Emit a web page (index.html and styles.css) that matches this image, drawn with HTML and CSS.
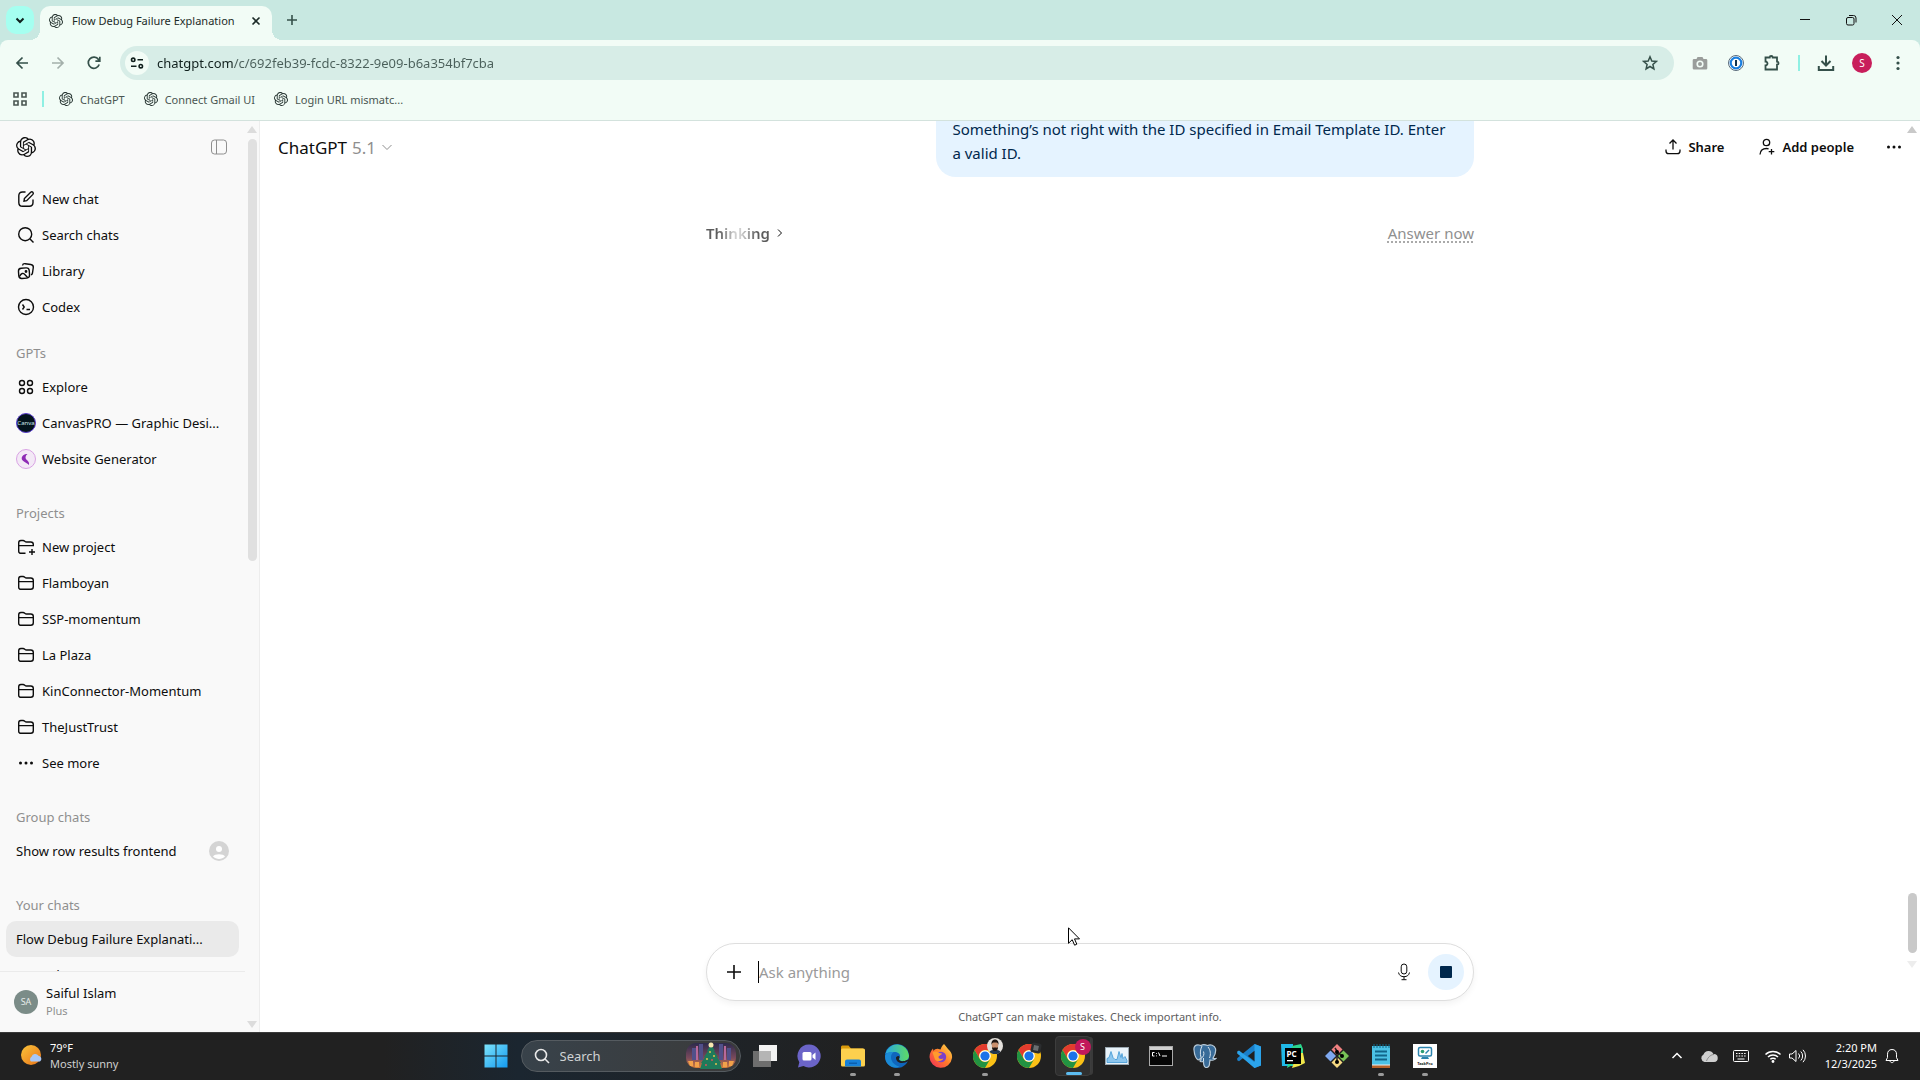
FILE: index.html
```html
<!DOCTYPE html>
<html lang="en">
<head>
  <meta charset="UTF-8" />
  <title>Flow Debug Failure Explanation</title>
  <link rel="stylesheet" href="styles.css">
</head>
<body>

<!-- shared icons -->
<svg class="sprite" aria-hidden="true">
  <symbol id="i-logo" viewBox="0 0 24 24"><path fill="currentColor" d="M22.2819 9.8211a5.9847 5.9847 0 0 0-.5157-4.9108 6.0462 6.0462 0 0 0-6.5098-2.9A6.0651 6.0651 0 0 0 4.9807 4.1818a5.9847 5.9847 0 0 0-3.9977 2.9 6.0462 6.0462 0 0 0 .7427 7.0966 5.98 5.98 0 0 0 .511 4.9107 6.051 6.051 0 0 0 6.5146 2.9001A5.9847 5.9847 0 0 0 13.2599 24a6.0557 6.0557 0 0 0 5.7718-4.2058 5.9894 5.9894 0 0 0 3.9977-2.9001 6.0557 6.0557 0 0 0-.7475-7.0729zm-9.022 12.6081a4.4755 4.4755 0 0 1-2.8764-1.0408l.1419-.0804 4.7783-2.7582a.7948.7948 0 0 0 .3927-.6813v-6.7369l2.02 1.1686a.071.071 0 0 1 .038.052v5.5826a4.504 4.504 0 0 1-4.4945 4.4944zm-9.6607-4.1254a4.4708 4.4708 0 0 1-.5346-3.0137l.142.0852 4.783 2.7582a.7712.7712 0 0 0 .7806 0l5.8428-3.3685v2.3324a.0804.0804 0 0 1-.0332.0615L9.74 19.9502a4.4992 4.4992 0 0 1-6.1408-1.6464zM2.3408 7.8956a4.485 4.485 0 0 1 2.3655-1.9728V11.6a.7664.7664 0 0 0 .3879.6765l5.8144 3.3543-2.0201 1.1685a.0757.0757 0 0 1-.071 0l-4.8303-2.7865A4.504 4.504 0 0 1 2.3408 7.872zm16.5963 3.8558L13.1038 8.364 15.1192 7.2a.0757.0757 0 0 1 .071 0l4.8303 2.7913a4.4944 4.4944 0 0 1-.6765 8.1042v-5.6772a.79.79 0 0 0-.407-.667zm2.0107-3.0231l-.142-.0852-4.7735-2.7818a.7759.7759 0 0 0-.7854 0L9.409 9.2297V6.8974a.0662.0662 0 0 1 .0284-.0615l4.8303-2.7866a4.4992 4.4992 0 0 1 6.6802 4.66zM8.3065 12.863l-2.02-1.1638a.0804.0804 0 0 1-.038-.0567V6.0742a4.4992 4.4992 0 0 1 7.3757-3.4537l-.142.0805L8.704 5.459a.7948.7948 0 0 0-.3927.6813zm1.0976-2.3654l2.602-1.4998 2.6069 1.4998v2.9994l-2.5974 1.4997-2.6067-1.4997Z"/></symbol>
  <symbol id="i-folder" viewBox="0 0 20 20"><path d="M2.7 14.2V5.8c0-1.4.7-2.3 2.2-2.3h2.2c1.7 0 1.6 1.5 3.4 1.5h4.3c1.7 0 2.5.9 2.5 2.4v6.4c0 1.5-.9 2.5-2.5 2.5H5.2c-1.6 0-2.5-.8-2.5-2.1zM2.7 8.6h14.6"/></symbol>
  <symbol id="i-dots" viewBox="0 0 20 20"><g fill="currentColor" stroke="none"><circle cx="4.5" cy="10" r="1.5"/><circle cx="10" cy="10" r="1.5"/><circle cx="15.500" cy="10" r="1.5"/></g></symbol>
  <symbol id="i-chrome" viewBox="0 0 24 24">
    <circle cx="12" cy="12" r="12" fill="#fbc116"/>
    <path fill="#e33b2e" d="M1.600 6A12 12 0 0 1 22.400 6H12a6 6 0 0 0-5.200 9z"/>
    <path fill="#229342" d="M1.600 6A12 12 0 0 0 12 24l5.200-9a6 6 0 0 1-10.400 0z"/>
    <circle cx="12" cy="12" r="5.800" fill="#fff"/>
    <circle cx="12" cy="12" r="4.600" fill="#1a73e8"/>
  </symbol>
</svg>

<header class="browser">
  <div class="tabstrip">
    <button class="tab-search" aria-label="Search tabs"><svg width="10" height="10" viewBox="0 0 10 10"><path d="M1.500 3.500 5 7l3.500-3.500" stroke-width="2"/></svg></button>
    <div class="tab">
      <svg class="favicon" width="14" height="14"><use href="#i-logo"/></svg>
      <span class="tab-title">Flow Debug Failure Explanation</span>
      <button aria-label="Close tab"><svg width="10" height="10" viewBox="0 0 10 10"><path d="m1.500 1.500 7 7m0-7-7 7" stroke-width="1.600"/></svg></button>
    </div>
    <button class="new-tab" aria-label="New tab"><svg width="12" height="12" viewBox="0 0 12 12"><path d="M6 1v10M1 6h10" stroke-width="1.600"/></svg></button>
    <div class="window-buttons">
      <button aria-label="Minimize"><svg width="12" height="12" viewBox="0 0 12 12"><path d="M1 5.500h10"/></svg></button>
      <button aria-label="Restore"><svg width="12" height="12" viewBox="0 0 12 12"><rect x="1.500" y="3.500" width="7.500" height="7.500" rx="1.500"/><path d="M4 1.500h4.500a2.500 2.500 0 0 1 2.500 2.500v4.500"/></svg></button>
      <button aria-label="Close"><svg width="12" height="12" viewBox="0 0 12 12"><path d="m1 1 10 10m0-10L1 11"/></svg></button>
    </div>
  </div>

  <div class="toolbar">
    <button aria-label="Back"><svg width="16" height="16" viewBox="0 0 16 16"><path d="M14 8H3m5.500-5.500L3 8l5.500 5.500" stroke-width="1.700"/></svg></button>
    <button class="off" aria-label="Forward"><svg width="16" height="16" viewBox="0 0 16 16"><path d="M2 8h11M7.500 2.500 13 8l-5.500 5.500" stroke-width="1.700"/></svg></button>
    <button aria-label="Reload"><svg width="16" height="16" viewBox="0 0 16 16"><path d="M13.200 9.500A5.600 5.600 0 1 1 12.500 4.500L13.500 6M13.800 1.800V6.200H9.400" stroke-width="1.700"/></svg></button>
    <div class="omnibox">
      <button class="site-info" aria-label="Site information"><svg width="14" height="14" viewBox="0 0 14 14"><circle cx="3.200" cy="3.800" r="1.700"/><path d="M7.500 3.800h5.500M1 10.200h5.500"/><circle cx="10.800" cy="10.200" r="1.700"/></svg></button>
      <input class="url" type="text" aria-label="Address" value="chatgpt.com/c/692feb39-fcdc-8322-9e09-b6a354bf7cba">
      <button aria-label="Bookmark"><svg width="16" height="16" viewBox="0 0 16 16"><path d="m8 1.800 1.800 4.200 4.500.4-3.400 3 1 4.500L8 11.500l-3.900 2.400 1-4.500-3.400-3 4.500-.4z" stroke-width="1.500"/></svg></button>
    </div>
    <div class="extensions">
      <button aria-label="Screenshot"><svg width="16" height="16" viewBox="0 0 16 16"><path fill="#9a9d9b" stroke="none" d="M2 4h2.500l1-2h5l1 2H14a1.300 1.300 0 0 1 1.300 1.300v8A1.300 1.300 0 0 1 14 14.600H2a1.300 1.300 0 0 1-1.300-1.300v-8A1.300 1.300 0 0 1 2 4z"/><circle cx="8" cy="9" r="2.800" stroke="#f2fcf6" stroke-width="1.600"/></svg></button>
      <button aria-label="Password manager"><svg width="16" height="16" viewBox="0 0 16 16"><circle cx="8" cy="8" r="7.500" stroke="#596b7a" stroke-width="1" fill="#fff"/><circle cx="8" cy="8" r="5.300" stroke="#1a7fe0" stroke-width="2.200"/><path d="M8 5v6" stroke="#12334f" stroke-width="2"/></svg></button>
      <button aria-label="Extensions"><svg width="18" height="18" viewBox="0 0 18 18"><path d="M2.500 3.500h4.200a1.500 1.500 0 0 1 3 0h4.300v4.200a1.500 1.500 0 0 1 0 3v4.800H2.500v-4a2 2 0 0 0 0-4z" stroke-width="1.800"/></svg></button>
      <i class="divider"></i>
      <button aria-label="Downloads"><svg width="18" height="18" viewBox="0 0 18 18"><path d="M9 1.500v9.500M4.500 7 9 11.500 13.500 7M1.800 12v4h14.400v-4" stroke-width="2"/></svg></button>
      <button aria-label="Profile"><span class="profile-dot">S</span></button>
      <button aria-label="Menu"><svg width="4" height="16" viewBox="0 0 4 16"><g fill="currentColor" stroke="none"><circle cx="2" cy="2.500" r="1.600"/><circle cx="2" cy="8" r="1.600"/><circle cx="2" cy="13.500" r="1.600"/></g></svg></button>
    </div>
  </div>

  <nav class="bookmarks">
    <button aria-label="Apps"><svg width="14" height="14" viewBox="0 0 14 14"><path d="M1 1h4v4H1zM9 1h4v4H9zM1 9h4v4H1zM9 9h4v4H9z" stroke-width="1.600"/></svg></button>
    <i class="divider"></i>
    <a href="#"><svg width="14" height="14"><use href="#i-logo"/></svg>ChatGPT</a>
    <a href="#"><svg width="14" height="14"><use href="#i-logo"/></svg>Connect Gmail UI</a>
    <a href="#"><svg width="14" height="14"><use href="#i-logo"/></svg>Login URL mismatc...</a>
  </nav>
</header>

<div class="app">
  <aside class="sidebar">
    <div class="sidebar-body">
      <div class="sidebar-head">
        <a href="#" aria-label="Home"><svg width="20" height="20"><use href="#i-logo"/></svg></a>
        <button aria-label="Close sidebar"><svg width="18" height="18" viewBox="0 0 18 18"><rect x="1.500" y="2" width="15" height="14" rx="3"/><path d="M6.500 2v14"/></svg></button>
      </div>
      <nav class="sidebar-nav">
        <a href="#"><svg class="ico" viewBox="0 0 20 20"><path d="M9.500 3H6.500C4 3 2.800 4.300 2.800 6.700v6.800C2.800 16 4 17.300 6.500 17.300h6.800c2.500 0 3.700-1.300 3.700-3.700v-3M8 12.200l.4-2.700 6.300-6.200c1.600-1.300 3.400.6 2.200 2.100l-6.200 6.300z"/></svg>New chat</a>
        <a href="#"><svg class="ico" viewBox="0 0 20 20"><circle cx="9.200" cy="9.200" r="6.500"/><path d="m14 14 3.500 3.500"/></svg>Search chats</a>
        <a href="#"><svg class="ico" viewBox="0 0 20 20"><rect x="2.600" y="7" width="10.800" height="10.300" rx="3" transform="rotate(-4 8 12)"/><path d="M6.500 4.500c.3-1.700 1.300-2 2.700-1.800l5.600.8c2 .3 2.700 1.200 2.500 3l-.8 5.500c-.2 1-.7 1.600-1.500 1.900M3.500 15.500c2-3.500 3.500-3.800 5.300-2l3 3.300"/><circle cx="10" cy="10.500" r=".7"/></svg>Library</a>
        <a href="#"><svg class="ico" viewBox="0 0 20 20"><circle cx="10" cy="10" r="7.500"/><path d="m6.500 7.500 1.700 2.500-1.700 2.500M10.500 12.500h3.500"/></svg>Codex</a>

        <h2 class="first">GPTs</h2>
        <a href="#"><svg class="ico" viewBox="0 0 20 20"><circle cx="6" cy="6" r="2.500"/><circle cx="14" cy="6" r="2.500"/><circle cx="6" cy="14" r="2.500"/><circle cx="14" cy="14" r="2.500"/></svg>Explore</a>
        <a href="#"><span class="gpt">Canva</span>CanvasPRO — Graphic Desi...</a>
        <a href="#"><svg class="ico" viewBox="0 0 20 20"><circle cx="10" cy="10" r="9.500" fill="#f3e9f6" stroke="#d9a3e4" stroke-width="1"/><path fill="#8e2bb5" stroke="none" d="M11.500 5C8 5 5.700 7 5.700 9.500c0 3 4.500 3.500 7.300 6.500.3-2-.3-3.500-2-5C9 9.500 9 7 11.500 5z"/></svg>Website Generator</a>

        <h2>Projects</h2>
        <a href="#"><svg class="ico" viewBox="0 0 20 20"><path d="M9.500 16.300H5.200c-1.600 0-2.500-.8-2.500-2.100V5.800c0-1.400.7-2.300 2.200-2.300h2.200c1.700 0 1.600 1.500 3.400 1.500h4.300c1.700 0 2.500.9 2.500 2.400v1.200H2.700M16 12v6m-3-3h6"/></svg>New project</a>
        <a href="#"><svg class="ico"><use href="#i-folder"/></svg>Flamboyan</a>
        <a href="#"><svg class="ico"><use href="#i-folder"/></svg>SSP-momentum</a>
        <a href="#"><svg class="ico"><use href="#i-folder"/></svg>La Plaza</a>
        <a href="#"><svg class="ico"><use href="#i-folder"/></svg>KinConnector-Momentum</a>
        <a href="#"><svg class="ico"><use href="#i-folder"/></svg>TheJustTrust</a>
        <a href="#"><svg class="ico"><use href="#i-dots"/></svg>See more</a>

        <h2>Group chats</h2>
        <a href="#">Show row results frontend<svg class="ico group" viewBox="0 0 20 20"><circle cx="10" cy="10" r="10" fill="#d4d4d4" stroke="none"/><circle cx="10" cy="8" r="3" fill="#fff" stroke="none"/><path d="M4 15.500c1.500-3 10.500-3 12 0-3 3.300-9 3.300-12 0z" fill="#fff" stroke="none"/></svg></a>

        <h2>Your chats</h2>
        <a href="#" class="active">Flow Debug Failure Explanati...</a>
        <a href="#">Amend</a>
      </nav>
      <button class="account">
        <span class="avatar">SA</span>
        <span class="account-name">Saiful Islam<small>Plus</small></span>
      </button>
    </div>
    <div class="scrollbar"><i class="up"></i><i class="thumb"></i><i class="down"></i></div>
  </aside>

  <main class="chat">
    <div class="chat-head">
      <button class="model">ChatGPT <span>5.1</span><svg width="12" height="12" viewBox="0 0 12 12"><path d="m1.500 4 4.500 4.500L10.500 4"/></svg></button>
      <div class="chat-actions">
        <button><svg width="18" height="18" viewBox="0 0 18 18"><path d="M9 11.500V2.500M5.500 5.500 9 2l3.500 3.500M2 11.500v1.500c0 2 .8 2.700 2.700 2.700h8.600c1.900 0 2.700-.7 2.700-2.700v-1.500"/></svg>Share</button>
        <button><svg width="18" height="18" viewBox="0 0 18 18"><circle cx="8.500" cy="4.500" r="3.200"/><path d="M2 16.500c.3-4 2.500-6 6.500-6 .8 0 1.500.1 2.100.3M13.500 11v5.500M10.700 13.700h5.600"/></svg>Add people</button>
        <button class="more" aria-label="More"><svg width="20" height="20"><use href="#i-dots"/></svg></button>
      </div>
    </div>

    <section class="thread">
      <p class="bubble">Something’s not right with the ID specified in Email Template ID. Enter a valid ID.</p>
      <div class="status">
        <button class="thinking"><span>Thinking</span><svg width="10" height="10" viewBox="0 0 10 10"><path d="M3 1.500 6.500 5 3 8.500"/></svg></button>
        <a href="#">Answer now</a>
      </div>
    </section>

    <footer class="composer-wrap">
      <form class="composer">
        <button type="button" aria-label="Add files"><svg width="20" height="20" viewBox="0 0 20 20"><path d="M10 3v14M3 10h14" stroke-width="1.600"/></svg></button>
        <i class="caret"></i>
        <input type="text" aria-label="Message" placeholder="Ask anything">
        <button type="button" aria-label="Dictate"><svg width="20" height="20" viewBox="0 0 20 20"><rect x="7.200" y="2" width="5.600" height="10" rx="2.800"/><path d="M4.500 10.500c.6 2.800 2.500 4.200 5.500 4.200s4.900-1.400 5.500-4.200M10 14.700v2.800M7.500 17.700h5"/></svg></button>
        <button type="button" class="stop" aria-label="Stop"><i></i></button>
      </form>
      <p>ChatGPT can make mistakes. Check important info.</p>
    </footer>
    <div class="scrollbar"><i class="up"></i><i class="thumb"></i><i class="down"></i></div>
    <svg class="cursor" width="12" height="19" viewBox="0 0 12 19"><path d="M.5.800v15.500l3.700-3.600 2.400 5.500 2.200-1-2.300-5.300h5z" fill="#fff" stroke="#000"/></svg>
  </main>
</div>

<div class="taskbar">
  <div class="weather">
    <svg width="24" height="24" viewBox="0 0 24 24"><defs><linearGradient id="sun" x1="0" y1="0" x2="1" y2="1"><stop offset="0" stop-color="#fbc53a"/><stop offset="1" stop-color="#e8731a"/></linearGradient></defs><circle cx="11" cy="11" r="10" fill="url(#sun)"/><path fill="#a8c8f8" d="M11 17.500a3 3 0 0 1 .5-4.800 4 4 0 0 1 7-1 3.200 3.200 0 0 1 1.500 5.800z"/></svg>
    <div>79°F<span>Mostly sunny</span></div>
  </div>

  <div class="apps">
    <button aria-label="Start"><svg width="24" height="24" viewBox="0 0 24 24"><defs><linearGradient id="win" x1="0" y1="0" x2="1" y2="1"><stop offset="0" stop-color="#7ce3fb"/><stop offset="1" stop-color="#139af0"/></linearGradient></defs><path fill="url(#win)" d="M.5.500h11v11H.5zM12.500.500h11v11h-11zM.5 12.500h11v11H.5zM12.500 12.500h11v11h-11z"/></svg></button>
    <label class="search">
      <svg width="16" height="16" viewBox="0 0 16 16"><circle cx="7" cy="7" r="5.500"/><path d="m11 11 4 4"/></svg>
      <input type="text" placeholder="Search" aria-label="Search">
      <svg class="tree" width="50" height="28" viewBox="0 0 50 28">
        <defs><linearGradient id="dusk" x1="0" y1="0" x2="0" y2="1"><stop offset="0" stop-color="#2c2a4c"/><stop offset=".6" stop-color="#7a4a5c"/><stop offset="1" stop-color="#d9803c"/></linearGradient></defs>
        <rect y="1" width="50" height="25" rx="10" fill="url(#dusk)"/>
        <path fill="#51508a" d="M6 6h4v12H6zM13 2h4v16h-4zM33 2h4v16h-4zM41 6h4v12h-4z"/>
        <path fill="#b8699a" d="M10 4h2v14h-2zM38 4h2v14h-2z"/>
        <path fill="#f2a24a" d="M2 19h5v5H4zM9 20h4v5H9zM37 20h4v5h-4zM43 19h5l-2 5h-3z"/>
        <path fill="#1f7a5a" d="m25 2 4 7h-1l4 6h-1l4 6h-1l2 6H14l2-6h-1l4-6h-1l4-6h-1z"/>
        <circle cx="25" cy="3" r="2.500" fill="#f8e7b0"/>
        <g fill="#f3c94f"><circle cx="24" cy="10" r=".9"/><circle cx="28" cy="14" r=".9"/><circle cx="21" cy="17" r=".9"/><circle cx="30" cy="22" r=".9"/></g>
        <g fill="#e8505b"><circle cx="26" cy="18" r=".9"/><circle cx="20" cy="23" r=".9"/></g>
      </svg>
    </label>
    <button aria-label="Task view"><svg width="24" height="24" viewBox="0 0 24 24"><path fill="#f3f3f3" d="M6 1h18v16H6z"/><path fill="#777" fill-opacity=".9" d="M0 7h18v16H0z"/><path fill="#b5b5b5" d="M6 7h12v10H6z"/></svg></button>
    <button aria-label="Chat"><svg width="24" height="24" viewBox="0 0 24 24"><path fill="#6b64c8" d="M12 .500A11.500 11.500 0 1 1 6.500 22L1 23.500l1.300-5.300A11.500 11.500 0 0 1 12 .500z"/><rect x="5.500" y="8" width="9" height="8.500" rx="1.500" fill="#fff"/><path fill="#fff" d="m15.500 11 3-2.500v7.500l-3-2.500z"/></svg></button>
    <button aria-label="File Explorer" class="open"><svg width="24" height="24" viewBox="0 0 24 24"><path fill="#d99a0b" d="M0 3.500C0 2 .500 1.500 2 1.500h5.500L10 4.500h12V8H0z"/><rect y="4.500" width="24" height="18" rx="1.500" fill="#fcd04e"/><path fill="#1680d8" d="M4 22.500v-5a2 2 0 0 1 2-2h12a2 2 0 0 1 2 2v5z"/><path fill="#0b5fae" d="M8 18.500h8v1.500H8z"/></svg></button>
    <button aria-label="Edge" class="open"><svg width="24" height="24" viewBox="0 0 24 24"><defs><linearGradient id="edge" x1="0" y1="0" x2="1" y2="0"><stop offset="0" stop-color="#27a7e4"/><stop offset="1" stop-color="#5fdc62"/></linearGradient></defs><circle cx="12" cy="12" r="12" fill="#0f66bd"/><path fill="url(#edge)" d="M.300 10A12 12 0 0 1 24 11.500c0 3.500-2.500 5.500-5.500 5.500-3 0-4.300-1-4.300-1.800 0-.7.9-1 .9-3 0-2.300-2.300-4.200-5.600-4.200C5 8 1.500 9 .300 10z"/><path fill="#1b8ad6" d="M.100 11.500C1.500 8.500 5 7.500 8.500 8.200 6 10 5.500 13 6.500 16c1.200 3.600 4.500 5.800 8 6.500C8 25.500-.5 21 .100 11.500z"/><path fill="#202020" d="M11 14c0 3 3 5 6 5 2.500 0 4.500-.800 5.500-1.500.5-.3.800 0 .5.500l1 .5v-3l-2 .5c-5 2.500-9 .5-8-1.500.800-1.200.5-2.500-.7-2.500-1.500 0-2.300 1-2.300 2z"/></svg></button>
    <button aria-label="Firefox"><svg width="24" height="24" viewBox="0 0 24 24"><defs><linearGradient id="fox" x1="1" y1="0" x2="0" y2="1"><stop offset="0" stop-color="#ffe14a"/><stop offset=".5" stop-color="#ff7a2a"/><stop offset="1" stop-color="#f0285e"/></linearGradient></defs><path fill="url(#fox)" d="M15 0c2 2 2.500 3.500 4.500 5.500 2.500 2 4 5 3.500 8.500A11.300 11.300 0 0 1 .500 13C.500 9 2.500 6.500 4 4.500l.500 2.500c1-1.500 3-2.500 5-2l2 .5C12.500 3 13 1.500 15 0z"/><circle cx="12" cy="13" r="5.200" fill="#7b40c9"/><path fill="#ff9a2e" d="M3.500 8.500c2.500-1.500 5-1 6.500.5l3 .5c0 1.500-3.500 2-3.500 3.500 0 2 2.500 2.500 5 1.500-2 3.500-7 3.500-8.500 1z"/></svg></button>
    <button aria-label="Chrome, first profile" class="open"><svg width="24" height="24"><use href="#i-chrome"/></svg><svg class="badge" width="16" height="16" viewBox="0 0 16 16"><circle cx="8" cy="8" r="8" fill="#e4e1dc"/><path fill="#22384f" d="M2.500 14c1-3 10-3 11 0a8 8 0 0 1-11 0z"/><ellipse cx="8" cy="7.500" rx="3.200" ry="4.500" fill="#c98f6c"/><path fill="#1d1512" d="M4.500 7C4 3 6 1.500 8 1.500S12 3 11.500 7c-.5-2-1-2.500-3.500-2.500S5 5 4.500 7zM5 9c.5 1 1.500.5 3 .5s2.500.5 3-.5c0 3-1.500 4-3 4s-3-1-3-4z"/></svg></button>
    <button aria-label="Chrome, second profile"><svg width="24" height="24"><use href="#i-chrome"/></svg><svg class="badge low" width="14" height="14" viewBox="0 0 14 14"><rect x="2" y="2" width="10" height="10" rx="2" fill="#2b2d2f" transform="rotate(12 7 7)"/><rect x="4.500" y="4.500" width="5" height="5" fill="#6a6e70" transform="rotate(12 7 7)"/></svg></button>
    <button aria-label="Chrome, current profile" class="current"><svg width="24" height="24"><use href="#i-chrome"/></svg><span class="badge letter">S</span></button>
    <button aria-label="Performance monitor"><svg width="24" height="24" viewBox="0 0 24 24"><rect x=".5" y="3.500" width="23" height="17" fill="#e9f3fa" stroke="#9aa7b0"/><path fill="#8cc6ee" stroke="#3f97d3" stroke-width=".8" d="M2 18.500v-4l2-1 2-6 2 6 2 2h2l2-8 2 6 1-4 1 5 2-2 2 4v2z"/></svg></button>
    <button aria-label="Terminal"><svg width="24" height="24" viewBox="0 0 24 24"><rect x=".5" y="2.500" width="23" height="19" fill="#050505" stroke="#aaa"/><path fill="#cfcfcf" d="M1 3h22v3H1z"/><path d="M5.500 8.500H3.500v3.500h2M7.500 9v.8M7.500 11.500v.8M9.500 8.500l1.500 3.500M13 12h5" stroke="#fff" fill="none"/></svg></button>
    <button aria-label="PostgreSQL"><svg width="24" height="24" viewBox="0 0 24 24"><path fill="#386b98" stroke="#b9cbd9" stroke-width="1.200" d="M6 1C2.500.500.500 2.500 1 6c.300 3 1.500 8 3.500 9.500 1.500 1 2.500-.5 3.500-1.500v2c-1 .5-1.500 1-.5 1.500 1 .5 2 .2 3 0 0 2.500.2 5.500 2.500 6 2.500 0 3.500-2 3.500-4l.5-3.500c2 .5 5-.2 6-1.500-1 .2-2 .3-3-.3 2-3 3-7 2.500-9.500C21.500 1 17.500.200 14.500 1.500 12 .500 9.500.500 8 1.500z"/><path d="M8 13.500C7 10 7 6 9 2M15 3c2.500 3 3 7 1.500 11M8.500 14c2-1 3-4 2-6.500M10.500 17V14" fill="none" stroke="#d8e4ee"/></svg></button>
    <button aria-label="VS Code"><svg width="24" height="24" viewBox="0 0 24 24"><path fill="#1a7fc9" d="M17.500 0 24 2.500v19L17.500 24 6.500 13.800 2 17.300.200 16.300v-2L17.500 0z"/><path fill="#2ba3ea" d="M17.500 24 .200 9.500v-2L2 6.500l15.500 11.800V0L24 2.500v19z"/><path fill="#202020" d="M17.500 6.800v10.400L10.800 12z"/></svg></button>
    <button aria-label="PyCharm"><svg width="24" height="24" viewBox="0 0 24 24"><path fill="#20b9e8" d="M0 0h12v22L1 22z"/><path fill="#2bd58c" d="M11 2 20 0l2 5v10L6 24z"/><path fill="#f2e84b" d="m22 9 2 10-6 3-7 2 5-15z"/><path d="M4 4h16v16H4z"/><text x="5.500" y="12.500" fill="#fff" font-size="8" font-weight="700">PC</text><path fill="#fff" d="M6 16h6v1.300H6z"/></svg></button>
    <button aria-label="Git"><svg width="24" height="24" viewBox="0 0 24 24"><path fill="#f08080" d="m12 0 5.500 5.500L12 11 6.500 5.500z"/><path fill="#7fa8ef" d="m5.500 6.500 5.500 5.500-5.500 5.500L0 12z"/><path fill="#78c257" d="m18.500 6.500 5.500 5.500-5.500 5.500L13 12z"/><path fill="#f6d982" d="m12 13 5.500 5.500L12 24l-5.500-5.500z"/><path d="M10 4l2 3v12M12 8l5 4" stroke="#222" stroke-width="1.500" fill="none"/><circle cx="12" cy="8" r="2"/><circle cx="17" cy="12" r="2"/><circle cx="12" cy="18" r="2"/></svg></button>
    <button aria-label="Notepad" class="open"><svg width="24" height="24" viewBox="0 0 24 24"><path fill="#4cc2e6" d="M3 2h18v19H3z"/><path fill="#b5622a" d="M3 21h18v3H3z"/><path fill="#eee" d="M3 20.500h18v1H3z"/><path d="M5 0v4M8 0v4M11 0v4M14 0v4M17 0v4M20 0v4" stroke="#0e6a8c"/><path d="M6 7.500h12M6 11.500h12M6 15.500h12" stroke="#11658a" stroke-width="1.800"/></svg></button>
    <button aria-label="TaskPro" class="open"><svg width="24" height="24" viewBox="0 0 24 24"><path fill="#fff" d="M0 0h24v24H0z"/><rect x="5.500" y="3.500" width="13" height="8.500" rx="1.500" fill="#fff" stroke="#2c84ae" stroke-width="1.500"/><path fill="#2c84ae" d="M9 13h6l1 2H8z"/><circle cx="9.500" cy="7.500" r="1.800" fill="#2b9c72"/><path d="M12.500 9.500 16 6" stroke="#2c84ae" stroke-width="1.500"/><text x="12" y="20.500" text-anchor="middle" fill="#222" font-size="4" font-weight="700">TaskPro</text></svg></button>
  </div>

  <div class="tray">
    <button aria-label="Hidden icons"><svg width="18" height="18" viewBox="0 0 18 18"><path d="m4.500 11 4.500-4.500 4.500 4.500" stroke-width="1.500"/></svg></button>
    <button aria-label="OneDrive"><svg width="18" height="18" viewBox="0 0 18 18"><path fill="#cfcfcf" stroke="none" d="M4.500 15a4 4 0 0 1-1-7.500A5.500 5.500 0 0 1 13.500 7a4 4 0 0 1 .5 8z"/><path stroke="#8a8a8a" d="M6.500 14C8 10 11 7.500 14 7.500"/></svg></button>
    <button aria-label="Keyboard"><svg width="18" height="18" viewBox="0 0 18 18"><rect x="1.500" y="3.500" width="15" height="11" rx="1"/><path d="M4 6.500h10M4 9h10" stroke-dasharray="1.500 1.200"/><path d="M5.500 12h7"/></svg></button>
    <button class="pair" aria-label="Network and volume">
      <svg width="18" height="18" viewBox="0 0 18 18"><path d="M1.500 7.500a10.600 10.600 0 0 1 15 0M4 10a7 7 0 0 1 10 0M6.300 12.300a3.800 3.800 0 0 1 5.400 0" stroke-width="1.500"/><circle cx="9" cy="14.500" r="1.400" fill="currentColor" stroke="none"/></svg>
      <svg width="18" height="18" viewBox="0 0 18 18"><path d="M1.500 7v4h2.500l4 3.500v-11L4 7zM10.500 6.500a3.500 3.500 0 0 1 0 5M12.800 4.500a6.500 6.500 0 0 1 0 9M15 2.800a9 9 0 0 1 0 12.400"/></svg>
    </button>
    <div class="clock">2:20 PM<span>12/3/2025</span></div>
    <button aria-label="Notifications"><svg width="16" height="16" viewBox="0 0 16 16"><path d="M8 1.500c-3 0-4.500 2-4.500 4.700v3.300L2 12.500h12l-1.500-3V6.200C12.500 3.500 11 1.500 8 1.500zM6 13c.5 2.200 3.500 2.200 4 0"/></svg></button>
  </div>
</div>

</body>
</html>
```
FILE: styles.css
```css
* {
  box-sizing: border-box;
}
body {
  margin: 0;
  height: 100vh;
  display: flex;
  flex-direction: column;
  overflow: hidden;
  font-family: "Noto Sans", "Open Sans", sans-serif;
  font-size: 13px;
  color: #0d0d0d;
}
button,
input {
  border: none;
  background: none;
  padding: 0;
  margin: 0;
  font: inherit;
  color: inherit;
  outline: none;
}
button {
  display: flex;
  align-items: center;
  justify-content: center;
}
a {
  color: inherit;
  text-decoration: none;
}
p {
  margin: 0;
}
svg {
  flex: none;
  display: block;
}
.sprite {
  position: absolute;
  width: 0;
  height: 0;
}

/* browser */
.browser {
  background: #c8e8e1;
  color: #35504a;
  border-bottom: 1px solid #d3e2dd;
}
.browser button svg,
.app button svg,
.tray svg,
.search svg,
.ico {
  fill: none;
  stroke: currentColor;
}
.tabstrip {
  height: 40px;
  padding: 6px 0 0 6px;
  display: flex;
}
.tab-search {
  width: 28px;
  height: 28px;
  border-radius: 10px;
  background: #a5fff0;
  color: #10201d;
}
.tab {
  position: relative;
  display: flex;
  align-items: center;
  gap: 9px;
  width: 232px;
  margin-left: 6px;
  padding: 0 8px 5px 9px;
  background: #f2fcf6;
  border-radius: 10px 10px 0 0;
  font-size: 11px;
  color: #1c2b28;
}
.tab::before,
.tab::after {
  content: "";
  position: absolute;
  bottom: 0;
  width: 10px;
  height: 10px;
}
.tab::before {
  left: -10px;
  background: radial-gradient(circle at 0 0, transparent 10px, #f2fcf6 10px);
}
.tab::after {
  right: -10px;
  background: radial-gradient(circle at 100% 0, transparent 10px, #f2fcf6 10px);
}
.tab-title {
  flex: 1;
  white-space: nowrap;
}
.tab button {
  width: 16px;
  height: 16px;
}
.new-tab {
  width: 28px;
  height: 28px;
  margin-left: 6px;
}
.window-buttons {
  display: flex;
  margin-left: auto;
  height: 28px;
  color: #111;
}
.window-buttons button {
  width: 46px;
}
.toolbar {
  display: flex;
  align-items: center;
  height: 46px;
  padding: 0 4px 0 14px;
  background: #f2fcf6;
  border-radius: 8px 8px 0 0;
}
.toolbar > button {
  width: 16px;
  margin-right: 20px;
}
.toolbar .off {
  color: #a4b0ab;
}
.omnibox {
  flex: 1;
  display: flex;
  align-items: center;
  gap: 8px;
  height: 34px;
  margin-left: -2px;
  padding: 0 16px 0 5px;
  border-radius: 17px;
  background: #d7ede7;
}
.site-info {
  width: 24px;
  height: 24px;
  border-radius: 50%;
  background: #f2fcf6;
  color: #10201d;
}
.site-info svg {
  stroke-width: 1.6;
}
.url {
  flex: 1;
  font-size: 13px;
  color: transparent;
  background: linear-gradient(to right, #10201d 77px, #4a5f5a 77px);
  background-clip: text;
  -webkit-background-clip: text;
}
.extensions {
  display: flex;
  align-items: center;
  margin-left: 8px;
}
.extensions button {
  width: 36px;
}
.extensions .divider {
  margin: 0 8px;
}
.divider {
  width: 2px;
  height: 16px;
  background: #8ff0e3;
}
.profile-dot {
  width: 20px;
  height: 20px;
  border-radius: 50%;
  background: #c81e5b;
  color: #fff;
  font-size: 10px;
  line-height: 20px;
}
.bookmarks {
  display: flex;
  align-items: center;
  gap: 15px;
  height: 34px;
  padding: 0 13px 8px;
  background: #f2fcf6;
  font-size: 11px;
  color: #4a5652;
}
.bookmarks a {
  display: flex;
  align-items: center;
  gap: 7px;
  margin-right: 4px;
}
.bookmarks a svg,
.favicon {
  color: #24322f;
}

/* app */
.app {
  flex: 1;
  min-height: 0;
  display: flex;
}
.sidebar {
  display: flex;
  width: 260px;
  background: #f9f9f9;
  border-right: 1px solid #ededed;
}
.sidebar-body {
  flex: 1;
  min-width: 0;
  display: flex;
  flex-direction: column;
}
.sidebar-head {
  display: flex;
  align-items: center;
  justify-content: space-between;
  height: 52px;
  padding: 0 17px 0 16px;
}
.sidebar-head button {
  color: #8f8f8f;
}
.sidebar-nav {
  flex: 1;
  min-height: 0;
  overflow: hidden;
  padding: 8px 6px 0;
}
.sidebar-nav a {
  display: flex;
  align-items: center;
  gap: 6px;
  height: 36px;
  padding: 0 10px;
  border-radius: 10px;
  white-space: nowrap;
}
.sidebar-nav .active {
  background: #eaeaea;
}
.sidebar-nav h2 {
  margin: 20px 0 0;
  padding: 0 10px;
  font-size: 13px;
  font-weight: 400;
  line-height: 32px;
  color: #8f8f8f;
}
.sidebar-nav h2.first {
  margin-top: 12px;
}
.ico {
  width: 20px;
  height: 20px;
  stroke-width: 1.4;
}
.group {
  margin-left: auto;
}
.gpt {
  width: 20px;
  height: 20px;
  border-radius: 50%;
  border: 1px solid #5b3fd0;
  background: #04141c;
  color: #cfe8ee;
  font-size: 6px;
  line-height: 18px;
  text-align: center;
}
.account {
  justify-content: flex-start;
  gap: 8px;
  height: 61px;
  padding: 0 14px;
  border-top: 1px solid #ebebeb;
  text-align: left;
}
.avatar {
  width: 24px;
  height: 24px;
  border-radius: 50%;
  background: #7b8c88;
  color: #e6ebea;
  font-size: 9px;
  line-height: 24px;
  text-align: center;
}
.account-name {
  line-height: 18px;
}
.account-name small {
  display: block;
  font-size: 11px;
  color: #8f8f8f;
}
.scrollbar {
  display: flex;
  flex-direction: column;
  align-items: center;
  width: 14px;
  padding: 5px 0 4px;
}
.scrollbar .up {
  border: 5px solid transparent;
  border-top: none;
  border-bottom: 7px solid #dcdcdc;
}
.scrollbar .down {
  margin-top: auto;
  border: 5px solid transparent;
  border-bottom: none;
  border-top: 7px solid #dcdcdc;
}
.scrollbar .thumb {
  width: 9px;
  height: 422px;
  margin-top: 6px;
  border-radius: 5px;
  background: #e0e0e0;
}

.chat {
  flex: 1;
  position: relative;
  display: flex;
  flex-direction: column;
  align-items: center;
  overflow: hidden;
  background: #fff;
}
.chat-head {
  position: absolute;
  top: 0;
  left: 0;
  right: 0;
  display: flex;
  align-items: center;
  justify-content: space-between;
  height: 52px;
  padding: 0 16px 0 18px;
}
.model {
  gap: 5px;
  font-size: 17px;
}
.model span,
.model svg {
  color: #8f8f8f;
}
.chat-actions {
  display: flex;
  align-items: center;
  gap: 34px;
  font-weight: 600;
}
.chat-actions button {
  gap: 6px;
}
.chat-actions svg {
  stroke-width: 1.3;
}
.chat-actions .more {
  margin-left: -4px;
}
.thread {
  width: 768px;
  max-width: 100%;
  display: flex;
  flex-direction: column;
  font-size: 15px;
  line-height: 24px;
}
.bubble {
  align-self: flex-end;
  width: 70%;
  margin-top: -4px;
  padding: 0 24px 12px 16px;
  border-radius: 0 0 20px 20px;
  background: #e5f3ff;
  color: #00284d;
}
.status {
  display: flex;
  justify-content: space-between;
  margin-top: 44px;
}
.thinking {
  gap: 5px;
  font-weight: 600;
}
.thinking span {
  color: transparent;
  background: linear-gradient(to right, #5d5d5d 20%, #d0d0d0 45%, #d0d0d0 55%, #5d5d5d 80%);
  background-clip: text;
  -webkit-background-clip: text;
}
.status a {
  color: #8f8f8f;
  text-decoration: underline dotted;
  text-underline-offset: 3px;
}
.composer-wrap {
  width: 768px;
  max-width: 100%;
  margin-top: auto;
  text-align: center;
}
.composer {
  display: flex;
  align-items: center;
  height: 58px;
  padding: 0 9px 0 17px;
  border: 1px solid #dedede;
  border-radius: 29px;
  background: #fff;
  box-shadow: 0 3px 6px rgba(0, 0, 0, 0.05);
}
.composer input {
  flex: 1;
  font-size: 15px;
}
.composer input::placeholder {
  color: #9a9a9a;
}
.caret {
  width: 1px;
  height: 22px;
  margin-left: 14px;
  background: #000;
}
.composer .stop {
  width: 36px;
  height: 36px;
  margin-left: 14px;
  border-radius: 50%;
  background: #e5f3ff;
}
.stop i {
  width: 12px;
  height: 12px;
  border-radius: 1px;
  background: #00284d;
}
.composer-wrap p {
  font-size: 11px;
  line-height: 31px;
  color: #5d5d5d;
}
.chat .scrollbar {
  position: absolute;
  top: 0;
  right: 0;
  bottom: 60px;
  width: 16px;
}
.chat .up {
  border-bottom-color: #c9c9c9;
}
.chat .thumb {
  height: 60px;
  margin-top: auto;
  margin-bottom: 8px;
  background: #c9c9c9;
}
.chat .down {
  margin-top: 0;
  border-top-color: #ededed;
}
.cursor {
  position: absolute;
  left: 808px;
  bottom: 86px;
}

/* taskbar */
.taskbar {
  display: grid;
  grid-template-columns: 1fr auto 1fr;
  height: 48px;
  padding-bottom: 2px;
  border-top: 1px solid #3a3a3a;
  background: linear-gradient(to right, #212121 20%, #1b2630 27%, #212121 45%);
  color: #fff;
  font-size: 11px;
  line-height: 16px;
}
.weather {
  display: flex;
  align-items: center;
  gap: 6px;
  padding-left: 20px;
}
.weather span,
.clock span {
  display: block;
}
.weather span {
  color: #cfcfcf;
}
.apps {
  display: flex;
  align-items: center;
}
.apps button {
  position: relative;
  width: 44px;
  height: 40px;
}
.apps .open::after,
.apps .current::after {
  content: "";
  position: absolute;
  left: 19px;
  bottom: 0;
  width: 6px;
  height: 3px;
  border-radius: 2px;
  background: #9a9a9a;
}
.apps .current {
  width: 36px;
  margin: 0 4px;
  border: 1px solid #3d3d3d;
  border-radius: 4px;
  background: #2f2f2f;
  box-shadow: 3px 0 0 -1px #3a3a3a;
}
.apps .current::after {
  left: 10px;
  width: 16px;
  background: #5cbcf0;
}
.badge {
  position: absolute;
  top: 2px;
  right: 4px;
}
.badge.low {
  top: 5px;
  right: 8px;
}
.badge.letter {
  right: -1px;
  width: 16px;
  height: 16px;
  border-radius: 50%;
  background: #c2185b;
  font-size: 9px;
}
.search {
  display: flex;
  align-items: center;
  gap: 10px;
  width: 220px;
  height: 32px;
  margin: 0 2px 0 3px;
  padding: 0 4px 0 12px;
  border: 1px solid #555b60;
  border-radius: 16px;
  background: linear-gradient(to right, #38424a, #3b3b3b);
  color: #e8e8e8;
}
.search > svg:first-child {
  stroke-width: 1.6;
}
.search input {
  flex: 1;
  min-width: 0;
  font-size: 13px;
}
.search input::placeholder {
  color: #cfd2d4;
}
.search .tree {
  stroke: none;
}
.tray {
  display: flex;
  align-items: center;
  justify-content: flex-end;
  gap: 14px;
  padding-right: 20px;
}
.pair {
  gap: 6px;
}
.clock {
  margin-left: 5px;
  text-align: right;
}
.tray .clock + button {
  margin-left: -7px;
}
```
